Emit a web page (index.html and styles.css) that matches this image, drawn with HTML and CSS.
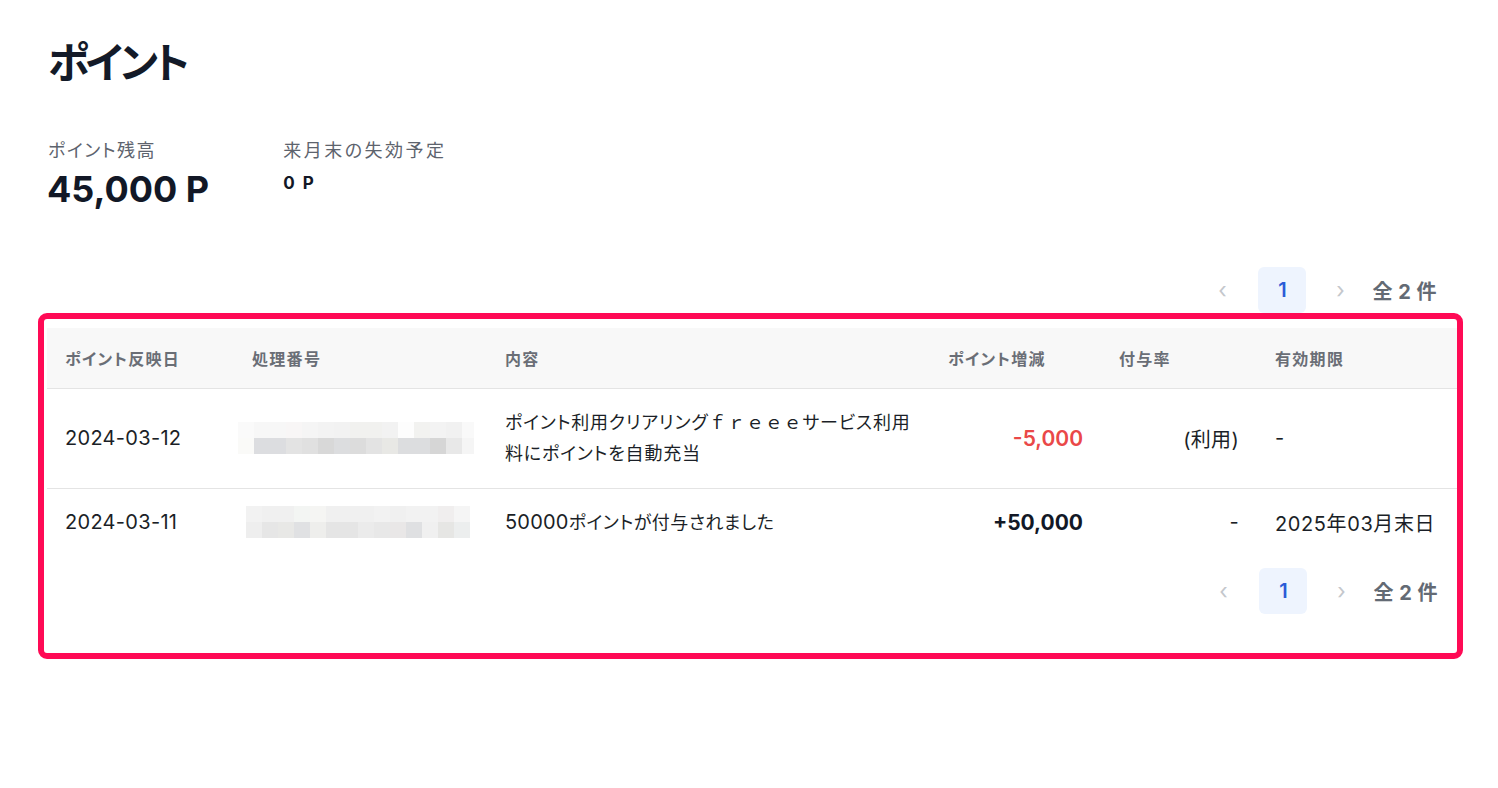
FILE: index.html
```html
<!DOCTYPE html>
<html lang="ja">
<head>
<meta charset="utf-8">
<title>ポイント</title>
<link rel="stylesheet" href="styles.css">
</head>
<body>
<main class="page">
  <h1 class="title">ポイント</h1>
  <section class="summary">
    <div class="stat">
      <div class="stat-label">ポイント残高</div>
      <div class="stat-value stat-value--big">45,000 P</div>
    </div>
    <div class="stat">
      <div class="stat-label">来月末の失効予定</div>
      <div class="stat-value stat-value--small">0 P</div>
    </div>
  </section>

  <nav class="pager pager--top">
    <span class="pager-arrow">‹</span>
    <span class="pager-page">1</span>
    <span class="pager-arrow">›</span>
    <span class="pager-total">全 2 件</span>
  </nav>

  <div class="highlight">
    <table class="history">
      <colgroup>
        <col class="c-date"><col class="c-no"><col class="c-desc"><col class="c-delta"><col class="c-rate"><col class="c-exp">
      </colgroup>
      <thead>
        <tr>
          <th>ポイント反映日</th>
          <th>処理番号</th>
          <th>内容</th>
          <th>ポイント増減</th>
          <th>付与率</th>
          <th>有効期限</th>
        </tr>
      </thead>
      <tbody>
        <tr class="row-first">
          <td class="plain">2024-03-12</td>
          <td class="no-cell">
            <svg class="blur blur--a" width="236" height="32" viewBox="0 0 236 32">
              <rect x="0" y="0" width="16" height="16" fill="#fafafa"/><rect x="16" y="0" width="16" height="16" fill="#f7f7f7"/><rect x="32" y="0" width="16" height="16" fill="#f7f7f7"/><rect x="48" y="0" width="16" height="16" fill="#f8f6f6"/><rect x="64" y="0" width="16" height="16" fill="#f5f5f5"/><rect x="80" y="0" width="16" height="16" fill="#f3f3f3"/><rect x="96" y="0" width="16" height="16" fill="#f2f2f2"/><rect x="112" y="0" width="16" height="16" fill="#f1f1ef"/><rect x="128" y="0" width="16" height="16" fill="#f1f1ef"/><rect x="144" y="0" width="16" height="16" fill="#f2f2f2"/><rect x="160" y="0" width="16" height="16" fill="#fdfdfd"/><rect x="176" y="0" width="16" height="16" fill="#f2f2f0"/><rect x="192" y="0" width="16" height="16" fill="#f3f3f3"/><rect x="208" y="0" width="16" height="16" fill="#f1f1f1"/><rect x="224" y="0" width="12" height="16" fill="#f9f9f9"/>
              <rect x="0" y="16" width="16" height="16" fill="#fafaf8"/><rect x="16" y="16" width="16" height="16" fill="#dcdde0"/><rect x="32" y="16" width="16" height="16" fill="#dcdde0"/><rect x="48" y="16" width="16" height="16" fill="#e3e3e3"/><rect x="64" y="16" width="16" height="16" fill="#e0e0e0"/><rect x="80" y="16" width="16" height="16" fill="#d8d8d8"/><rect x="96" y="16" width="16" height="16" fill="#dcdddf"/><rect x="112" y="16" width="16" height="16" fill="#dcdcdc"/><rect x="128" y="16" width="16" height="16" fill="#e3e3e3"/><rect x="144" y="16" width="16" height="16" fill="#e8e8e5"/><rect x="160" y="16" width="16" height="16" fill="#dcdddf"/><rect x="176" y="16" width="16" height="16" fill="#dcdddf"/><rect x="192" y="16" width="16" height="16" fill="#d6d6d6"/><rect x="208" y="16" width="16" height="16" fill="#e8e8e8"/><rect x="224" y="16" width="12" height="16" fill="#f5f5f5"/>
            </svg>
          </td>
          <td class="desc">ポイント利用クリアリング<span class="fw">ｆｒｅｅｅ</span>サービス利用料にポイントを自動充当</td>
          <td class="num num--minus">-5,000</td>
          <td class="plain rate">(利用)</td>
          <td class="plain">-</td>
        </tr>
        <tr class="row-second">
          <td class="plain">2024-03-11</td>
          <td class="no-cell">
            <svg class="blur blur--b" width="224" height="32" viewBox="0 0 224 32">
              <rect x="0" y="0" width="16" height="16" fill="#f2f2f2"/><rect x="16" y="0" width="16" height="16" fill="#f0f0f0"/><rect x="32" y="0" width="16" height="16" fill="#f0f0f0"/><rect x="48" y="0" width="16" height="16" fill="#f3f5f3"/><rect x="64" y="0" width="16" height="16" fill="#f5f5f3"/><rect x="80" y="0" width="16" height="16" fill="#f0f0f0"/><rect x="96" y="0" width="16" height="16" fill="#f0f0f0"/><rect x="112" y="0" width="16" height="16" fill="#f0f0f0"/><rect x="128" y="0" width="16" height="16" fill="#f2f2f2"/><rect x="144" y="0" width="16" height="16" fill="#f0f0f0"/><rect x="160" y="0" width="16" height="16" fill="#f2f2f2"/><rect x="176" y="0" width="16" height="16" fill="#f2f2f2"/><rect x="192" y="0" width="16" height="16" fill="#f0eeee"/><rect x="208" y="0" width="16" height="16" fill="#f5f5f5"/>
              <rect x="0" y="16" width="16" height="16" fill="#eeeeee"/><rect x="16" y="16" width="16" height="16" fill="#e6e6e6"/><rect x="32" y="16" width="16" height="16" fill="#e8e8e6"/><rect x="48" y="16" width="16" height="16" fill="#e0e1e3"/><rect x="64" y="16" width="16" height="16" fill="#eeeeec"/><rect x="80" y="16" width="16" height="16" fill="#e5e5e5"/><rect x="96" y="16" width="16" height="16" fill="#e5e5e5"/><rect x="112" y="16" width="16" height="16" fill="#ebebeb"/><rect x="128" y="16" width="16" height="16" fill="#e8e8e8"/><rect x="144" y="16" width="16" height="16" fill="#e9e7e7"/><rect x="160" y="16" width="16" height="16" fill="#dfe0e2"/><rect x="176" y="16" width="16" height="16" fill="#f0f0f0"/><rect x="192" y="16" width="16" height="16" fill="#e6e6e4"/><rect x="208" y="16" width="16" height="16" fill="#eceeee"/>
            </svg>
          </td>
          <td class="desc desc--short"><span class="digits">50000</span>ポイントが付与されました</td>
          <td class="num num--plus">+50,000</td>
          <td class="plain rate">-</td>
          <td class="plain exp">2025年03月末日</td>
        </tr>
      </tbody>
    </table>

    <nav class="pager pager--bottom">
      <span class="pager-arrow">‹</span>
      <span class="pager-page">1</span>
      <span class="pager-arrow">›</span>
      <span class="pager-total">全 2 件</span>
    </nav>
  </div>
</main>
</body>
</html>
```

FILE: styles.css
```css
* { box-sizing: border-box; }

html, body {
  margin: 0;
  padding: 0;
  background: #ffffff;
}

body {
  font-family: Inter, "Noto Sans CJK JP", "Noto Sans", sans-serif;
  color: #1b1f27;
}

.page {
  padding: 30px 41px 0 48px;
}

.title {
  margin: 0;
  font-size: 42px;
  line-height: 66px;
  font-weight: 700;
  color: #131a28;
  font-feature-settings: "palt";
  letter-spacing: -3.5px;
}

.summary {
  display: flex;
  gap: 74px;
  margin-top: 42px;
}

.stat-label {
  font-size: 18px;
  line-height: 26px;
  color: #5d636d;
  font-feature-settings: "palt";
  letter-spacing: 1.5px;
}

.stat:nth-child(2) .stat-label {
  letter-spacing: 2.5px;
}

.stat-value {
  font-weight: 700;
  color: #121826;
}

.stat-value--big {
  font-size: 36px;
  line-height: 48px;
  margin-left: -1px;
  margin-top: 1px;
}

.stat-value--small {
  font-size: 17px;
  line-height: 22px;
  letter-spacing: 2px;
  margin-top: 8px;
}

/* pager */
.pager {
  display: flex;
  align-items: center;
  justify-content: flex-end;
  height: 46px;
}

.pager--top {
  margin-top: 54px;
  padding-right: 19px;
}

.pager--bottom {
  margin-top: 12px;
  padding-right: 18px;
}

.pager-arrow {
  width: 36px;
  text-align: center;
  font-size: 22px;
  color: #c4c7cc;
  line-height: 46px;
}

.pager-page {
  width: 48px;
  height: 46px;
  margin: 0 16px 0 18px;
  border-radius: 6px;
  background: #eef4fe;
  color: #2a5bd7;
  font-size: 20px;
  font-weight: 600;
  display: flex;
  align-items: center;
  justify-content: center;
}

.pager-total {
  margin-left: 14px;
  font-size: 20px;
  font-weight: 700;
  color: #636a74;
  letter-spacing: 1.5px;
  word-spacing: -2px;
}

/* highlight frame */
.highlight {
  margin-left: -10px;
  margin-right: -6px;
  border: 6px solid #ff0a55;
  border-radius: 9px;
  padding: 9px 0 39px 3px;
}

/* table */
.history {
  width: 100%;
  border-collapse: collapse;
  table-layout: fixed;
}

.c-date { width: 187px; }
.c-no { width: 253px; }
.c-desc { width: 443px; }
.c-delta { width: 171px; }
.c-rate { width: 156px; }
.c-exp { width: auto; }

.history th {
  background: #f8f8f8;
  height: 60px;
  padding: 0 18px;
  text-align: left;
  font-size: 16px;
  font-weight: 700;
  color: #6a6e76;
  font-feature-settings: "palt";
  letter-spacing: 1.3px;
  border-bottom: 1px solid #e4e4e4;
}

.history td {
  padding: 0 18px;
  color: #1b1f27;
  vertical-align: middle;
}

.plain {
  font-size: 20px;
  letter-spacing: 0.3px;
}

.exp {
  letter-spacing: 0.6px;
}

.row-first td {
  height: 100px;
  border-bottom: 1px solid #e4e4e4;
}

.row-second td {
  height: 68px;
}

.history .desc {
  font-size: 18px;
  line-height: 31px;
  font-feature-settings: "palt";
  letter-spacing: 0.8px;
  padding-right: 8px;
}

.history .desc--short {
  letter-spacing: 0.5px;
}

.fw {
  font-feature-settings: normal;
}

.digits {
  font-size: 20px;
  letter-spacing: 0.2px;
}

.history .no-cell {
  padding: 0;
}

.blur {
  display: block;
}

.blur--a { margin-left: 4px; }
.blur--b { margin-left: 12px; }

.num {
  text-align: right;
  font-size: 21px;
  font-weight: 600;
}

.history .num--minus { color: #ea4848; }
.history .num--plus { color: #121826; font-weight: 700; }

.rate {
  text-align: right;
}
```
